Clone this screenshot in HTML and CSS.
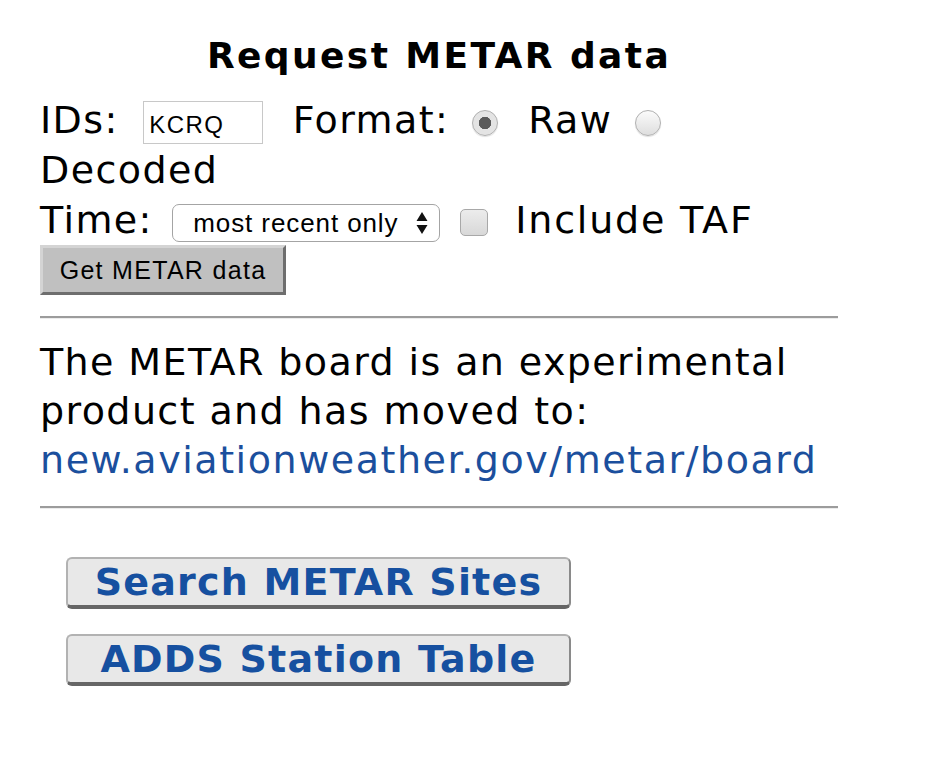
FILE: index.html
```html
<!DOCTYPE html>
<html lang="en">
<head>
  <meta charset="UTF-8" />
  <title>METAR Data</title>
  <link rel="stylesheet" href="styles.css">
</head>
<body>
  <div class="container">
    <h1>Request METAR data</h1>
    <form class="request">
      <div class="fields">
        IDs: <input type="text" class="ids" value="KCRQ">
        <span class="label-format">Format:</span> <input type="radio" name="format" class="radio" checked>
        <span class="label-raw">Raw</span> <input type="radio" name="format" class="radio radio-2"> Decoded
      </div>
      <div class="fields">
        Time: <span class="select"><span class="select-text">most recent only</span><svg class="arrows" width="12" height="24" viewBox="0 0 12 24"><path d="M6 1 L11.5 10 L0.5 10 Z M0.5 14 L11.5 14 L6 23 Z" fill="#111"/></svg></span>
        <input type="checkbox" class="check"> <span class="label-taf">Include TAF</span>
      </div>
      <button type="button" class="submit">Get METAR data</button>
    </form>

    <hr>

    <p class="notice">
      The METAR board is an experimental product and has moved to:
      <a href="#">new.aviationweather.gov/metar/board</a>
    </p>

    <hr>

    <div class="links">
      <button type="button" class="big">Search METAR Sites</button>
      <button type="button" class="big">ADDS Station Table</button>
    </div>
  </div>
</body>
</html>
```

FILE: styles.css
```css
body {
  margin: 0;
  background: white;
  font-family: "DejaVu Sans", Verdana, sans-serif;
  font-size: 38px;
  letter-spacing: 1.4px;
  color: black;
}

.container {
  width: 798px;
  margin-left: 40px;
  padding-top: 34px;
}

h1 {
  font-size: 36px;
  letter-spacing: 2.4px;
  text-align: center;
  margin: 0 0 17px;
  line-height: 44px;
}

.fields {
  line-height: 50px;
}

.ids {
  width: 120px;
  height: 43px;
  box-sizing: border-box;
  border: 1px solid #c8c8c8;
  padding: 4px 5px 0;
  font-family: "Liberation Sans", Arial, sans-serif;
  font-size: 24px;
  letter-spacing: 1.5px;
  vertical-align: middle;
  margin: 0 0 0 11px;
}

.label-format {
  margin-left: 16px;
}

.label-raw {
  margin-left: 17px;
}

.radio {
  appearance: none;
  width: 26px;
  height: 26px;
  box-sizing: border-box;
  border-radius: 50%;
  border: 1px solid #b0b0b0;
  background: linear-gradient(#fbfbfb, #dedede);
  box-shadow: 0 1px 1px rgba(0, 0, 0, 0.12);
  margin: 0 0 0 9px;
  vertical-align: middle;
}

.radio:checked {
  background: radial-gradient(circle, #5a5a5a 0 6px, #e4e4e4 6.5px 100%);
}

.radio-2 {
  margin-left: 9px;
}

.select {
  display: inline-flex;
  align-items: center;
  justify-content: space-between;
  width: 268px;
  height: 38px;
  box-sizing: border-box;
  border: 1px solid #a4a4a4;
  border-radius: 7px;
  padding: 0 11px 0 20px;
  font-family: "Liberation Sans", Arial, sans-serif;
  font-size: 26px;
  letter-spacing: 0.9px;
  line-height: 36px;
  vertical-align: middle;
  margin-left: 6px;
}

.check {
  appearance: none;
  width: 28px;
  height: 27px;
  box-sizing: border-box;
  border-radius: 5px;
  border: 1px solid #a8a8a8;
  background: linear-gradient(#ececec, #d8d8d8);
  margin: 0 0 0 6px;
  vertical-align: middle;
}

.label-taf {
  margin-left: 14px;
  letter-spacing: 1.8px;
}

.submit {
  display: block;
  font-family: "Liberation Sans", Arial, sans-serif;
  font-size: 25px;
  letter-spacing: 1.3px;
  width: 246px;
  height: 50px;
  background: #c0c0c0;
  border: 3px solid;
  border-color: #d4d4d4 #6e6e6e #6e6e6e #d4d4d4;
  padding: 0;
  color: black;
}

hr {
  height: 0;
  border: none;
  border-top: 2px solid #9c9c9c;
  border-bottom: 1px solid #ececec;
  margin: 21px 0 0;
}

.notice {
  margin: 19px 0;
  line-height: 49px;
}

.notice a {
  color: #1b4f9d;
  text-decoration: none;
  letter-spacing: 1.55px;
}

.links {
  padding: 48px 0 0 26px;
  display: flex;
  flex-direction: column;
  align-items: flex-start;
  gap: 25px;
}

.big {
  width: 505px;
  height: 52px;
  box-sizing: border-box;
  background: #e8e8e8;
  border: 2px solid #b2b2b2;
  border-right-color: #8a8a8a;
  border-bottom: 4px solid #666;
  border-radius: 6px;
  font-family: "DejaVu Sans", Verdana, sans-serif;
  font-weight: bold;
  font-size: 38px;
  letter-spacing: 1.2px;
  color: #1650a0;
  padding: 0;
  line-height: 44px;
}
```
